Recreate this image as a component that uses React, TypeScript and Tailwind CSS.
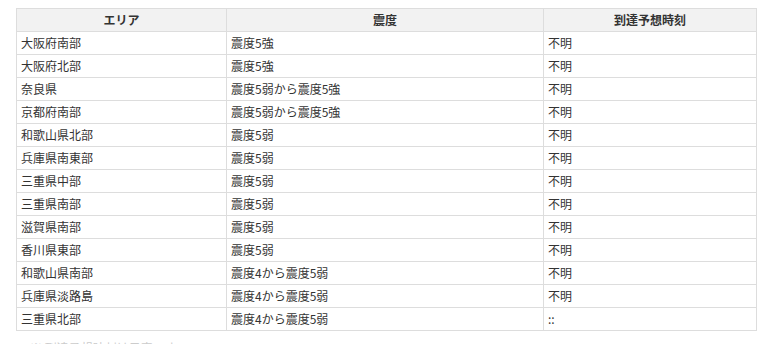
import React from 'react';

const rows: [string, string, string][] = [
  ['大阪府南部', '震度5強', '不明'],
  ['大阪府北部', '震度5強', '不明'],
  ['奈良県', '震度5弱から震度5強', '不明'],
  ['京都府南部', '震度5弱から震度5強', '不明'],
  ['和歌山県北部', '震度5弱', '不明'],
  ['兵庫県南東部', '震度5弱', '不明'],
  ['三重県中部', '震度5弱', '不明'],
  ['三重県南部', '震度5弱', '不明'],
  ['滋賀県南部', '震度5弱', '不明'],
  ['香川県東部', '震度5弱', '不明'],
  ['和歌山県南部', '震度4から震度5弱', '不明'],
  ['兵庫県淡路島', '震度4から震度5弱', '不明'],
  ['三重県北部', '震度4から震度5弱', '::'],
];

export default function App() {
  return (
    <div
      className="w-[774px] h-[344px] overflow-hidden bg-white pt-2 pl-4 text-[12px] text-[#333]"
      style={{ fontFamily: '"Noto Sans CJK JP", "Liberation Sans", sans-serif' }}
    >
      <table className="w-[740px] border-collapse table-fixed">
        <colgroup>
          <col className="w-[210px]" />
          <col className="w-[317px]" />
          <col className="w-[213px]" />
        </colgroup>
        <thead>
          <tr className="h-[23px] bg-[#f2f2f2]">
            <th className="border border-[#dddddd] font-bold text-center leading-none p-0">エリア</th>
            <th className="border border-[#dddddd] font-bold text-center leading-none p-0">震度</th>
            <th className="border border-[#dddddd] font-bold text-center leading-none p-0">到達予想時刻</th>
          </tr>
        </thead>
        <tbody>
          {rows.map(([area, shindo, time]) => (
            <tr key={area} className="h-[23px]">
              <td className="border border-[#dddddd] px-1 py-0 leading-none">{area}</td>
              <td className="border border-[#dddddd] px-1 py-0 leading-none">{shindo}</td>
              <td className="border border-[#dddddd] px-1 py-0 leading-none">{time}</td>
            </tr>
          ))}
        </tbody>
      </table>
      <p className="mt-[11px] pl-[14px] text-[12px] text-[#ccc] leading-none">※ 到達予想時刻は目安です</p>
    </div>
  );
}
